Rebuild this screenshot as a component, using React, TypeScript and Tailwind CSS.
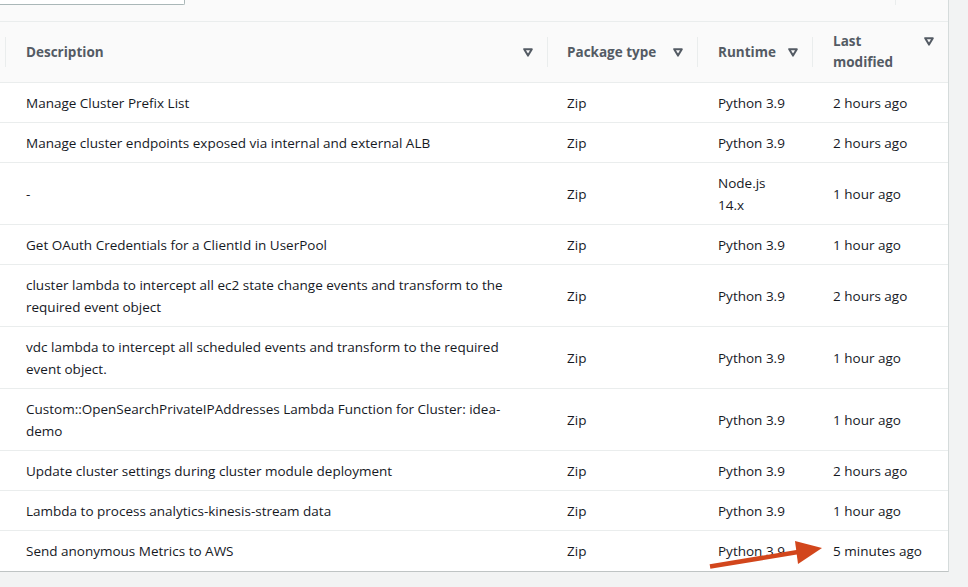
type Row = { desc: string; pkg: string; runtime: string; modified: string };

const rows: Row[] = [
  { desc: 'Manage Cluster Prefix List', pkg: 'Zip', runtime: 'Python 3.9', modified: '2 hours ago' },
  { desc: 'Manage cluster endpoints exposed via internal and external ALB', pkg: 'Zip', runtime: 'Python 3.9', modified: '2 hours ago' },
  { desc: '-', pkg: 'Zip', runtime: 'Node.js 14.x', modified: '1 hour ago' },
  { desc: 'Get OAuth Credentials for a ClientId in UserPool', pkg: 'Zip', runtime: 'Python 3.9', modified: '1 hour ago' },
  { desc: 'cluster lambda to intercept all ec2 state change events and transform to the required event object', pkg: 'Zip', runtime: 'Python 3.9', modified: '2 hours ago' },
  { desc: 'vdc lambda to intercept all scheduled events and transform to the required event object.', pkg: 'Zip', runtime: 'Python 3.9', modified: '1 hour ago' },
  { desc: 'Custom::OpenSearchPrivateIPAddresses Lambda Function for Cluster: idea-demo', pkg: 'Zip', runtime: 'Python 3.9', modified: '1 hour ago' },
  { desc: 'Update cluster settings during cluster module deployment', pkg: 'Zip', runtime: 'Python 3.9', modified: '2 hours ago' },
  { desc: 'Lambda to process analytics-kinesis-stream data', pkg: 'Zip', runtime: 'Python 3.9', modified: '1 hour ago' },
  { desc: 'Send anonymous Metrics to AWS', pkg: 'Zip', runtime: 'Python 3.9', modified: '5 minutes ago' },
];

function SortIcon() {
  return (
    <svg width="10" height="9" viewBox="0 0 10 9" className="shrink-0">
      <polygon points="1.2,1.2 8.8,1.2 5,7.6" fill="none" stroke="#545b64" strokeWidth="2" strokeLinejoin="round" />
    </svg>
  );
}

function HeaderCell({ label, pl, top }: { label: string; pl: string; top?: boolean }) {
  return (
    <div className={`relative flex ${top ? 'items-start' : 'items-center'} justify-between pr-[14px] ${pl}`}>
      <div className={`absolute left-0 ${top ? 'top-[6px]' : 'top-[15px]'} h-[30px] w-px bg-[#eaeded]`} />
      <span className={top ? 'w-[70px] leading-[21px]' : 'leading-[22px]'}>{label}</span>
      <span className={top ? 'mt-[6px]' : ''}>
        <SortIcon />
      </span>
    </div>
  );
}

export default function App() {
  return (
    <div
      className="relative h-[587px] w-full overflow-hidden bg-[#f2f3f3] text-[13.5px] text-[#16191f]"
      style={{ fontFamily: '"Open Sans", "Noto Sans", sans-serif' }}
    >
      <div className="w-[949px] border-r border-b border-r-[#d5dbdb] border-b-[#bfc4c4] bg-white">
        {/* top strip */}
        <div className="flex h-[22px] items-start justify-between border-b border-[#eaeded] bg-[#fafafa]">
          <div className="h-[5px] w-[185px] rounded-br-[2px] border-r border-b border-[#aab7b8] bg-white" />
          <div className="mr-[52px] h-[5px] w-px bg-[#eaeded]" />
        </div>
        {/* header */}
        <div className="grid h-[61px] grid-cols-[5px_542px_150px_115px_136px] border-b border-[#eaeded] bg-[#fafafa] font-bold text-[#545b64]">
          <div />
          <HeaderCell label="Description" pl="pl-[21px]" />
          <HeaderCell label="Package type" pl="pl-[20px]" />
          <HeaderCell label="Runtime" pl="pl-[21px]" />
          <div className="pt-[9px]">
            <HeaderCell label="Last modified" pl="pl-[21px]" top />
          </div>
        </div>
        {/* body */}
        {rows.map((r, i) => {
          const last = i === rows.length - 1;
          const pad = last ? 'pt-[9px] pb-[9px]' : 'pt-[9px] pb-[8px]';
          return (
            <div
              key={i}
              className={`grid grid-cols-[5px_542px_150px_115px_136px] leading-[22px] ${last ? '' : 'border-b border-[#eaeded]'}`}
            >
              <div />
              <div className={`flex items-center ${pad} pl-[21px] pr-[20px]`}>{r.desc}</div>
              <div className={`flex items-center ${pad} pl-[20px] pr-[20px]`}>{r.pkg}</div>
              <div className={`flex items-center ${pad} pl-[21px] pr-[22px]`}>{r.runtime}</div>
              <div className={`flex items-center ${pad} pl-[21px] pr-[10px]`}>{r.modified}</div>
            </div>
          );
        })}
      </div>
      {/* annotation arrow */}
      <svg className="pointer-events-none absolute left-0 top-0" width="968" height="587" viewBox="0 0 968 587">
        <line x1="710" y1="566.5" x2="804" y2="551" stroke="#d2461c" strokeWidth="4.5" />
        <polygon points="795,541 822,548 798,564" fill="#d2461c" />
      </svg>
    </div>
  );
}
